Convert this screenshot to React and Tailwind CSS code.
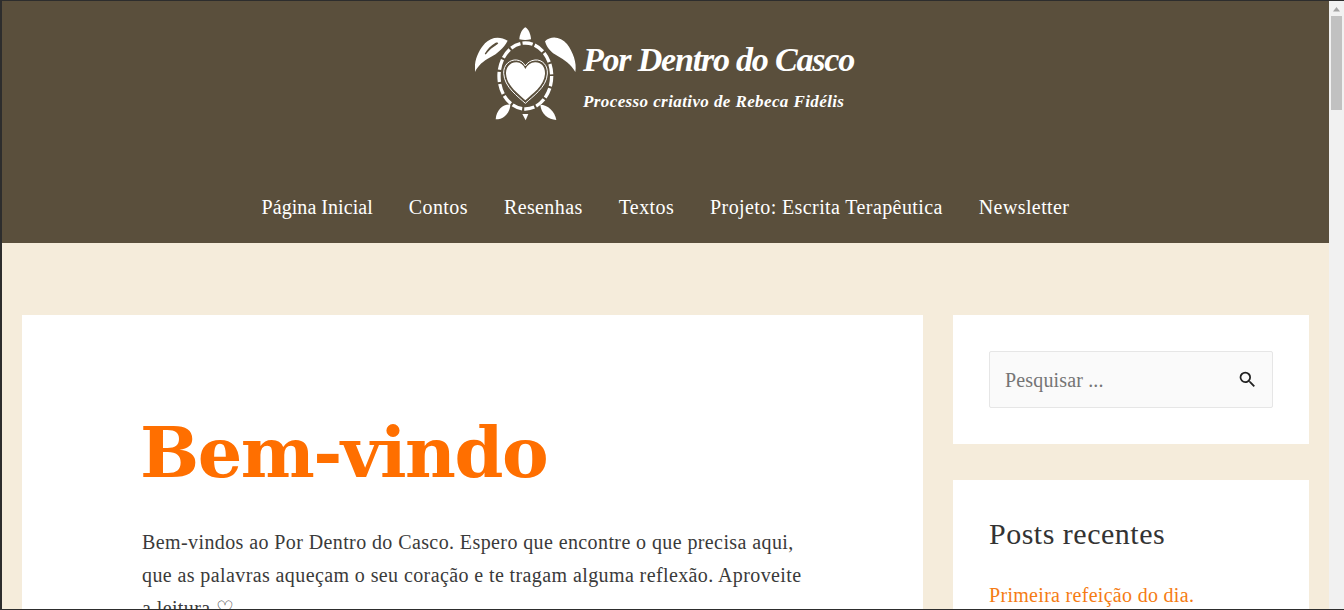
const navItems = ["Página Inicial", "Contos", "Resenhas", "Textos", "Projeto: Escrita Terapêutica", "Newsletter"];

const TurtleLogo = () => (
  <svg viewBox="30 0 315 315" width="105" height="105" className="shrink-0" fill="#fff">
    {/* head */}
    <path d="M181 22 C191 28 197 42 198 58 C186 61 175 61 163 58 C164 42 171 28 181 22Z" />
    {/* front flippers */}
    <path
      fillRule="evenodd"
      d="M128 62 C106 48 78 50 60 70 C40 92 26 124 30 156 C40 136 54 124 76 112 C98 100 116 84 128 62Z M60 100 C66 88 78 76 92 68 C98 66 102 68 98 72 C88 80 80 84 72 92 C68 96 65 101 62 103 C60 104 59 102 60 100Z"
    />
    <path d="M240 64 C258 46 288 50 306 72 C324 96 336 128 331 156 C318 132 298 120 278 108 C258 98 246 84 240 64Z" />
    {/* back flippers */}
    <path d="M136 254 C114 252 94 270 92 298 C114 298 134 282 136 254Z" />
    <path d="M226 254 C248 254 270 274 274 300 C250 298 228 282 226 254Z" />
    <path d="M172 282 L190 282 L182 301Z" />
    {/* shell */}
    <ellipse
      cx="181"
      cy="168"
      rx="79"
      ry="99"
      fill="none"
      stroke="#fff"
      strokeWidth="10"
      pathLength="360"
      strokeDasharray="20 4"
    />
    {/* heart */}
    <path
      d="M181 250 C160 230 118 202 116 160 C115 134 135 118 155 120 C167 121 176 128 181 138 C187 128 197 121 210 120 C231 118 249 135 247 162 C245 202 202 230 181 250Z"
      fill="none"
      stroke="#fff"
      strokeWidth="3"
    />
    <path d="M181 241 C162 223 125 198 123 161 C122 139 139 126 155 127 C167 128 176 135 181 147 C187 135 197 128 210 127 C227 126 241 139 240 162 C238 198 200 223 181 241Z" />
  </svg>
);

const Scrollbar = () => (
  <div className="w-[15px] shrink-0 bg-[#f1f1f1] flex flex-col items-center">
    <svg width="15" height="15" viewBox="0 0 15 15" className="shrink-0" fill="#a3a3a3">
      <path d="M7.5 6 L11 10.5 L4 10.5Z" />
    </svg>
    <div className="w-[11px] h-[94px] bg-[#c1c1c1]" />
  </div>
);

export default function App() {
  return (
    <div
      className="h-[610px] w-[1344px] overflow-hidden flex bg-[#f5ecdb] border-t border-b border-[#2d2d2d] text-[#3a3a3a]"
      style={{ fontFamily: '"Liberation Serif", serif' }}
    >
      <div className="w-[2px] shrink-0 bg-[#2d2d2d]" />
      <div className="flex-1 min-w-0 overflow-hidden">
        <header className="h-[242px] bg-[#5a4f3c] flex flex-col items-center pt-[19px] text-white">
          <div className="w-[381px] flex gap-[3px] h-[105px]">
            <TurtleLogo />
            <div className="flex flex-col">
              <span className="text-[34px] leading-[42px] mt-[19px] font-bold italic tracking-[-1.2px] whitespace-nowrap">
                Por Dentro do Casco
              </span>
              <span className="text-[17px] leading-[20px] mt-[11px] font-bold italic tracking-[0.4px] whitespace-nowrap">
                Processo criativo de Rebeca Fidélis
              </span>
            </div>
          </div>
          <nav className="flex gap-[36px] mt-[70px] text-[20px] leading-[24px] tracking-[0.4px]">
            {navItems.map((item) => (
              <a key={item} href="#" className="whitespace-nowrap first:tracking-[0.05px]">
                {item}
              </a>
            ))}
          </nav>
        </header>

        <div className="flex gap-[30px] pl-[20px] pr-[20px] pt-[72px]">
          <main className="w-[901px] shrink-0 bg-white px-[120px] pt-[88px] pb-10">
            <h1
              className="text-[70px] leading-[100px] font-bold text-[#ff6f00] tracking-[-1.5px] -ml-0.5"
              style={{ fontFamily: '"DejaVu Serif", serif' }}
            >
              Bem-vindo
            </h1>
            <p className="mt-[23px] text-[20px] leading-[33px] tracking-[0.4px]">
              Bem-vindos ao Por Dentro do Casco. Espero que encontre o que precisa aqui, que as palavras aqueçam o seu
              coração e te tragam alguma reflexão. Aproveite a leitura ♡
            </p>
          </main>

          <aside className="flex-1 min-w-0 flex flex-col gap-[36px]">
            <div className="bg-white p-[36px]">
              <form className="h-[57px] bg-[#fafafa] border border-[#e6e6e6] rounded-[2px] flex items-center pl-[15px] pr-[14px]">
                <input
                  placeholder="Pesquisar ..."
                  className="flex-1 min-w-0 bg-transparent outline-none text-[20px] tracking-[0.15px] placeholder:text-[#757575]"
                />
                <svg width="21" height="21" viewBox="0 0 24 24" fill="#222" className="shrink-0">
                  <path d="M15.5 14h-.79l-.28-.27A6.471 6.471 0 0 0 16 9.5 6.5 6.5 0 1 0 9.5 16c1.61 0 3.09-.59 4.23-1.57l.27.28v.79l5 4.99L20.49 19l-4.99-5zm-6 0C7.01 14 5 11.99 5 9.5S7.01 5 9.5 5 14 7.01 14 9.5 11.99 14 9.5 14z" />
                </svg>
              </form>
            </div>
            <div className="bg-white px-[36px] pt-[36px] pb-10">
              <h2 className="text-[30px] leading-[36px] tracking-[0.5px] text-[#333]">Posts recentes</h2>
              <a href="#" className="block mt-[29px] text-[20px] leading-[28px] tracking-[0.3px] text-[#f57c14]">
                Primeira refeição do dia.
              </a>
            </div>
          </aside>
        </div>
      </div>
      <Scrollbar />
    </div>
  );
}
